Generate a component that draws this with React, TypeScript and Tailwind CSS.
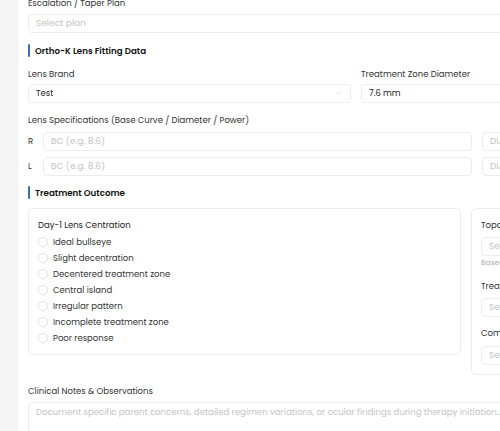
import { ChevronDown } from "lucide-react";

const font = { fontFamily: 'Poppins, Inter, "Noto Sans", sans-serif' };

const centration = [
  "Ideal bullseye",
  "Slight decentration",
  "Decentered treatment zone",
  "Central island",
  "Irregular pattern",
  "Incomplete treatment zone",
  "Poor response",
];

function SectionTitle({ children }: { children: string }) {
  return (
    <div className="flex items-center gap-[5px] h-[13px]">
      <span className="w-[2px] h-[13px] bg-[#3f6db3] rounded-sm" />
      <span className="text-[8.7px] leading-[12px] font-semibold text-[#111]">{children}</span>
    </div>
  );
}

function Label({ children }: { children: string }) {
  return <div className="text-[8.5px] leading-[12px] text-[#333] whitespace-nowrap">{children}</div>;
}

function Field({ text, placeholder = false, chevron = false, className = "" }: { text: string; placeholder?: boolean; chevron?: boolean; className?: string }) {
  return (
    <div
      className={`h-[19px] border border-[#ececec] rounded-[4px] bg-white flex items-center justify-between px-[7px] ${
        placeholder ? "text-[#c4c4c4] text-[9px]" : "text-[#222] text-[8.5px]"
      } ${className}`}
    >
      <span className="whitespace-nowrap overflow-hidden">{text}</span>
      {chevron && <ChevronDown size={9} strokeWidth={1.2} className="text-[#bbb] shrink-0" />}
    </div>
  );
}

export default function App() {
  return (
    <div className="flex w-[500px] h-[431px] overflow-hidden bg-white" style={font}>
      <div className="w-[18px] shrink-0 bg-[#f5f5f5] border-r border-[#eeeeee]" />
      <div className="flex-1 overflow-hidden">
        <div className="w-[666px] pl-[10px] -mt-[3px] flex flex-col">
          {/* escalation */}
          <Label>Escalation / Taper Plan</Label>
          <Field text="Select plan" placeholder className="mt-[5px]" />

          {/* fitting data */}
          <div className="mt-[11px]">
            <SectionTitle>Ortho-K Lens Fitting Data</SectionTitle>
          </div>
          <div className="grid grid-cols-2 gap-x-[10px] mt-[11px]">
            <div className="flex flex-col gap-[4px]">
              <Label>Lens Brand</Label>
              <Field text="Test" chevron />
            </div>
            <div className="flex flex-col gap-[4px]">
              <Label>Treatment Zone Diameter</Label>
              <Field text="7.6 mm" />
            </div>
          </div>

          <div className="mt-[11px]">
            <Label>Lens Specifications (Base Curve / Diameter / Power)</Label>
          </div>
          <div className="flex flex-col gap-[6px] mt-[6px]">
            {["R", "L"].map((eye) => (
              <div key={eye} className="flex items-center">
                <span className="w-[15px] text-[8.5px] text-[#333]">{eye}</span>
                <Field text="BC (e.g. 8.6)" placeholder className="flex-1 h-[18px]" />
                <Field text="DIA (e.g. 10.6)" placeholder className="w-[96px] ml-[10px] h-[18px]" />
                <Field text="Power" placeholder className="w-[96px] ml-[10px] h-[18px]" />
              </div>
            ))}
          </div>

          {/* outcome */}
          <div className="mt-[10px]">
            <SectionTitle>Treatment Outcome</SectionTitle>
          </div>
          <div className="grid grid-cols-[433px_1fr] gap-x-[10px] items-start mt-[9px]">
            <div className="border border-[#ececec] rounded-[5px] h-[147px] px-[9px] pt-[10px]">
              <div className="text-[8.5px] leading-[12px] text-[#222]">Day-1 Lens Centration</div>
              <div className="flex flex-col mt-[3px]">
                {centration.map((c) => (
                  <div key={c} className="flex items-center gap-[5px] h-[16px]">
                    <span className="w-[10px] h-[10px] rounded-full border border-[#e2e2e2]" />
                    <span className="text-[8.5px] text-[#333]">{c}</span>
                  </div>
                ))}
              </div>
            </div>
            <div className="border border-[#ececec] rounded-[5px] h-[167px] px-[9px] pt-[10px]">
              <Label>Topography Pattern</Label>
              <Field text="Select pattern" placeholder className="mt-[6px]" />
              <div className="text-[7.5px] leading-[10px] text-[#aaa] mt-[2px] whitespace-nowrap">Based on corneal topography</div>
              <div className="mt-[12px]">
                <Label>Treatment Response</Label>
              </div>
              <Field text="Select response" placeholder className="mt-[6px]" />
              <div className="mt-[10px]">
                <Label>Complications</Label>
              </div>
              <Field text="Select" placeholder className="mt-[7px]" />
            </div>
          </div>

          <div className="mt-[10px]">
            <Label>Clinical Notes &amp; Observations</Label>
          </div>
          <div className="mt-[5px] h-[60px] border border-[#ececec] rounded-[5px] px-[7px] pt-[3px] text-[8.6px] text-[#c4c4c4] whitespace-nowrap overflow-hidden">
            Document specific parent concerns, detailed regimen variations, or ocular findings during therapy initiation...
          </div>
        </div>
      </div>
    </div>
  );
}
